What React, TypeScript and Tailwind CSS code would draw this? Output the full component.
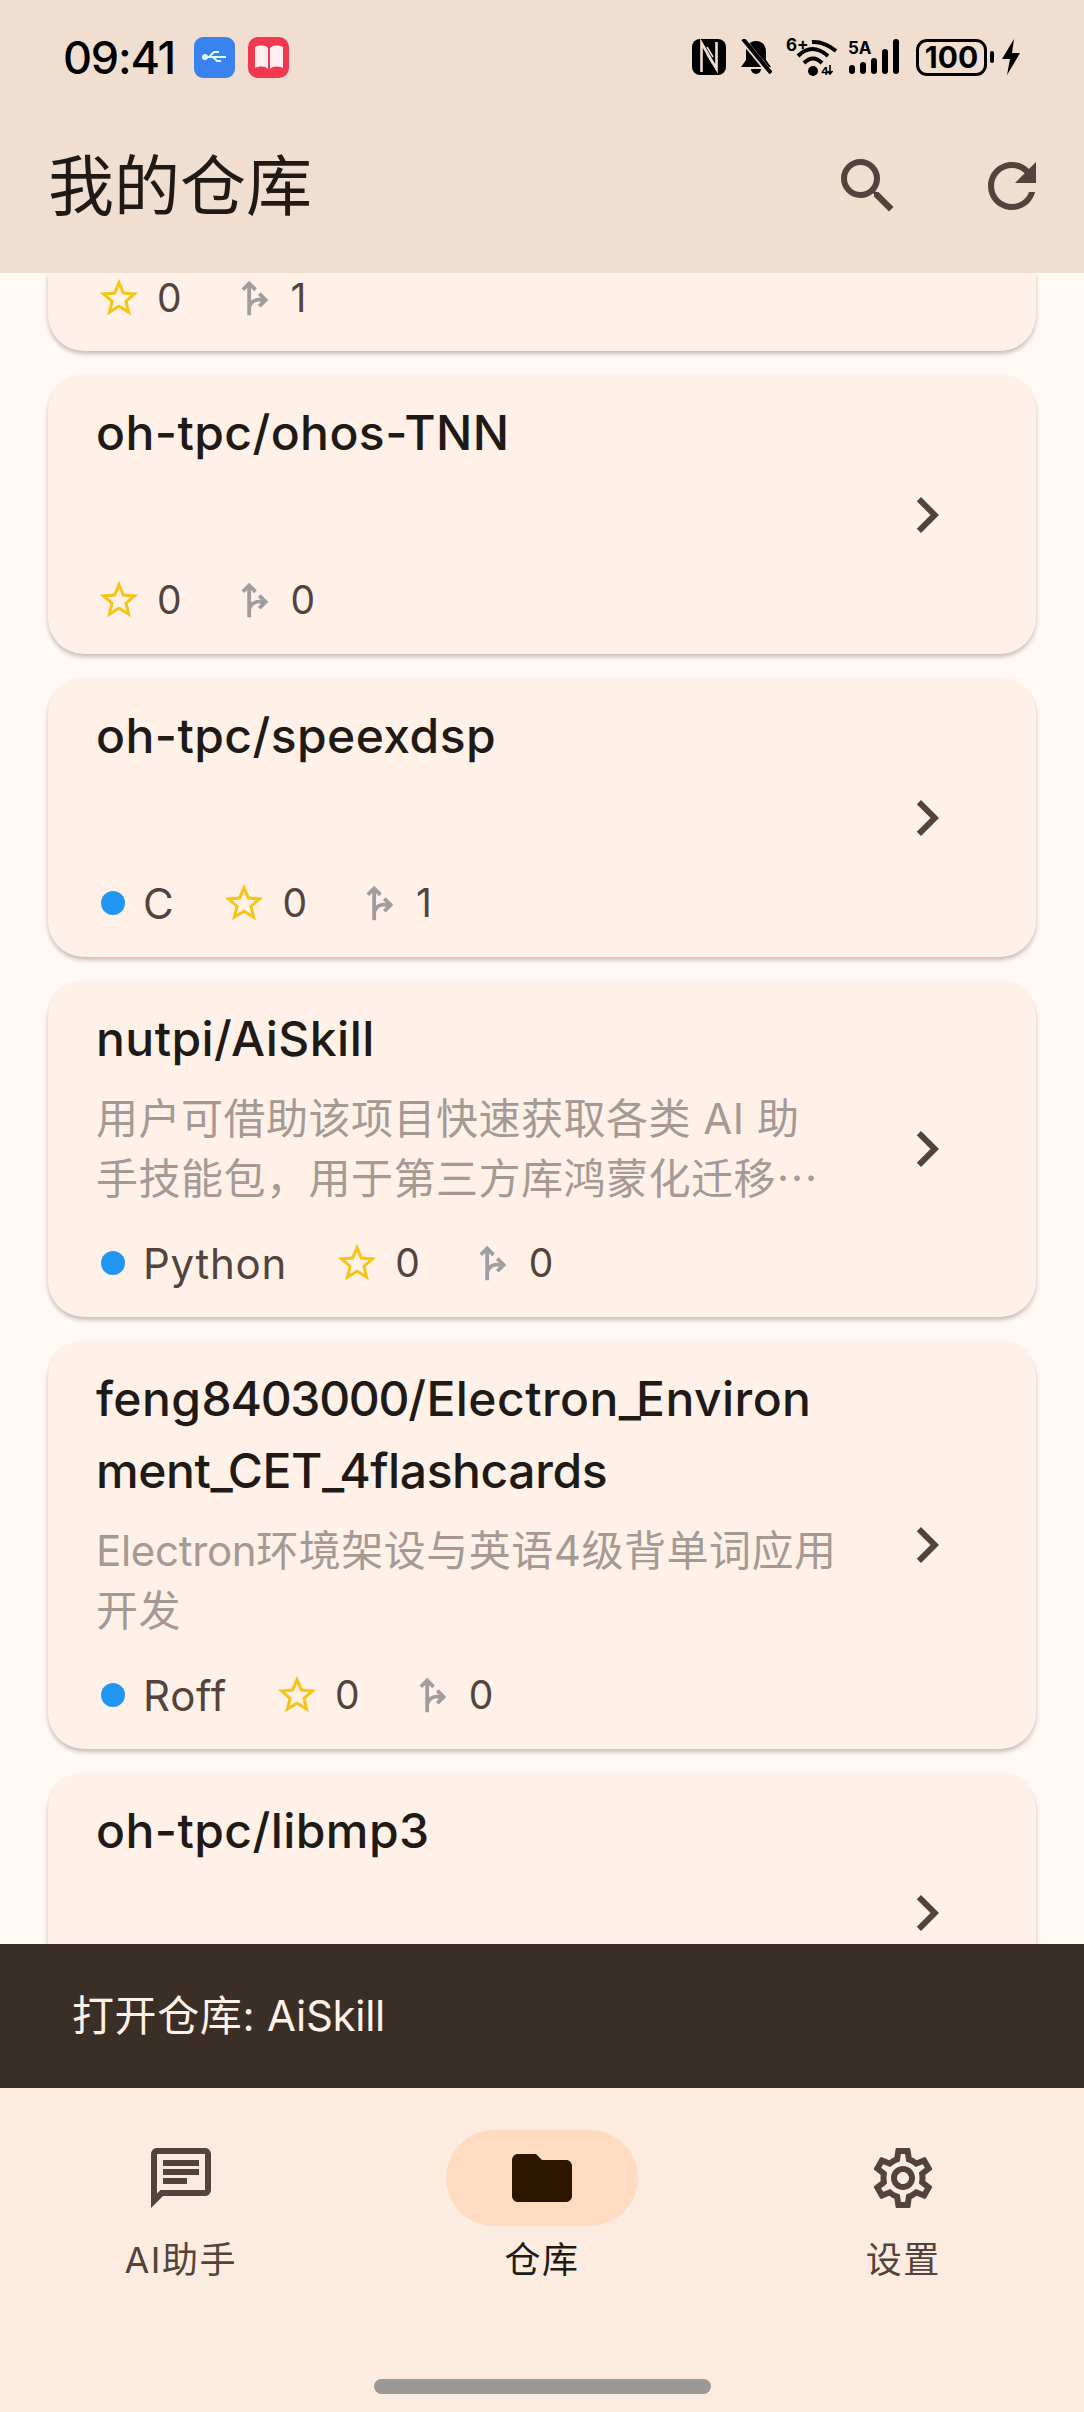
import React from "react";
import { MdSearch, MdRefresh, MdChevronRight, MdStarBorder, MdOutlineForkRight, MdOutlineChat, MdFolder, MdOutlineSettings } from "react-icons/md";

type Repo = { title: React.ReactNode; desc?: React.ReactNode; lang?: string; stars?: number; forks?: number };

const Meta = ({ lang, stars, forks }: { lang?: string; stars: number; forks: number }) => (
  <div className="flex h-[60px] items-center text-[39px] text-[#52443c]">
    {lang && (
      <>
        <span className="ml-[5px] h-[24px] w-[24px] rounded-full bg-[#2196f3]" />
        <span className="ml-[18px] mr-[47px] text-[42px] tracking-[0.75px]">{lang}</span>
      </>
    )}
    <MdStarBorder className="h-[46px] w-[46px] shrink-0 text-[#f5c518]" />
    <span className="ml-[15px]">{stars}</span>
    <MdOutlineForkRight className="ml-[48px] h-[46px] w-[46px] shrink-0 text-[#9e9e9e]" />
    <span className="ml-[15px]">{forks}</span>
  </div>
);

const Card = ({ title, desc, lang, stars, forks }: Repo) => (
  <div className="flex w-[988px] shrink-0 items-center rounded-[36px] bg-[#fff1e8] pr-[70px] pl-[48px] shadow-[0_3px_4px_rgba(60,40,30,0.28)]">
    <div className="w-[745px] pt-[22px] pb-[24px]">
      <div className="text-[48px] leading-[72px] font-medium tracking-[0.45px] whitespace-nowrap text-[#201a17]">{title}</div>
      <div className="mt-[14px] min-h-[63px] text-[42px] leading-[60px] tracking-[0.5px] whitespace-nowrap text-[#a39a94]">{desc}</div>
      <div className="mt-[24px] h-[60px]">
        {stars !== undefined && forks !== undefined && <Meta lang={lang} stars={stars} forks={forks} />}
      </div>
    </div>
    <MdChevronRight className="ml-[50px] h-[72px] w-[72px] shrink-0 text-[#52443c]" />
  </div>
);

const Dots = () => <span className="font-['Noto_Sans_CJK_SC'] leading-[0]">…</span>;
const U = () => <span className="tracking-[-5px]">_</span>;
const N = ({ children }: { children: React.ReactNode }) => <span className="tracking-[-1.3px]">{children}</span>;

const StatusIcons = () => (
  <div className="flex items-center text-black">
    <svg width="34" height="36" viewBox="0 0 34 36" className="mr-[14px]">
      <rect x="0" y="0" width="34" height="36" rx="8" fill="#000" />
      <path d="M9.5 33 V4 L24.5 30 V3" stroke="#f0dfd1" strokeWidth="2.6" fill="none" />
      <path d="M15 15 L21 25 M15 8 L21 18" stroke="#f0dfd1" strokeWidth="1.6" fill="none" />
    </svg>
    <svg width="32" height="36" viewBox="0 0 32 36" className="mr-[14px]">
      <path d="M16 2c6 0 10 4 10 11v8l5 7H1l5-7v-8C6 6 10 2 16 2z" fill="#000" />
      <path d="M11 30h10a5 5 0 0 1-10 0z" fill="#000" />
      <path d="M2 0 L30 34" stroke="#f0dfd1" strokeWidth="6" />
      <path d="M3 0 L31 34" stroke="#000" strokeWidth="4" />
    </svg>
    <svg width="52" height="42" viewBox="0 0 52 42" className="mr-[10px]">
      <text x="0" y="15" fontSize="17" fontWeight="700" fontFamily="Inter, sans-serif">6+</text>
      <path d="M26 6 Q38 5 50 15" stroke="#000" strokeWidth="4" fill="none" />
      <path d="M12 20 Q26 6 42 20" stroke="#000" strokeWidth="4" fill="none" />
      <path d="M18 27 Q27 18 36 27" stroke="#000" strokeWidth="4" fill="none" />
      <circle cx="27" cy="35" r="5" fill="#000" />
      <text x="35" y="39" fontSize="11" fontWeight="700" fontFamily="Inter, sans-serif">4</text>
      <path d="M44 29v9M41.5 35l2.5 3 2.5-3" stroke="#000" strokeWidth="1.6" fill="none" />
    </svg>
    <svg width="54" height="36" viewBox="0 0 54 36" className="mr-[14px]">
      <text x="0" y="15" fontSize="17" fontWeight="700" fontFamily="Inter, sans-serif">5A</text>
      <rect x="1" y="26" width="6" height="9" rx="3" fill="#000" />
      <rect x="12" y="23" width="6" height="12" rx="3" fill="#000" />
      <rect x="23" y="19" width="6" height="16" rx="3" fill="#000" />
      <rect x="34" y="10" width="6" height="25" rx="3" fill="#000" />
      <rect x="45" y="0" width="6" height="35" rx="3" fill="#000" />
    </svg>
    <div className="flex h-[37px] w-[71px] items-center justify-center rounded-[11px] border-[3px] border-black text-[30px] leading-none font-bold">100</div>
    <span className="ml-[3px] h-[12px] w-[4px] rounded-[2px] bg-black" />
    <svg width="20" height="36" viewBox="0 0 20 36" className="ml-[7px]">
      <path d="M13 0 L1 20 H9 L6 36 L19 14 H11Z" fill="#000" />
    </svg>
  </div>
);

const NavItem = ({ icon, label, active }: { icon: React.ReactNode; label: string; active?: boolean }) => (
  <div className="flex flex-col items-center">
    <div className={`flex h-[96px] w-[192px] items-center justify-center rounded-full ${active ? "bg-[#ffdcc1]" : ""}`}>{icon}</div>
    <div className={`mt-[10px] text-[36px] leading-[48px] tracking-[1.5px] ${active ? "text-[#201a17]" : "text-[#52443c]"}`}>{label}</div>
  </div>
);

export default function App() {
  return (
    <div className="flex h-[2412px] w-[1084px] flex-col overflow-hidden bg-[#fff9f4] font-['Inter','Noto_Sans_CJK_SC',sans-serif]" lang="zh-CN">
      <header className="relative z-10 h-[273px] shrink-0 bg-[#f0dfd1]">
        <div className="flex h-[114px] items-center justify-between pr-[63px] pl-[63px]">
          <div className="flex items-center">
            <span className="w-[131px] text-[45px] leading-none tracking-[-1.2px] font-medium text-black">09:41</span>
            <span className="flex h-[41px] w-[41px] items-center justify-center rounded-[9px] bg-[#3a82ee]">
              <svg width="28" height="16" viewBox="0 0 28 16">
                <path d="M3 8h22M8 8l5-5h5M12 8l4 4h4" stroke="#dff" strokeWidth="2" fill="none" />
                <circle cx="4" cy="8" r="3" fill="#dff" />
              </svg>
            </span>
            <span className="ml-[13px] flex h-[41px] w-[41px] items-center justify-center rounded-[10px] bg-[#f0384f]">
              <svg width="30" height="26" viewBox="0 0 30 26">
                <path d="M1 3c5-2 10-2 13 1v21c-3-3-8-3-13-1zM29 3c-5-2-10-2-13 1v21c3-3 8-3 13-1z" fill="#ffeef0" />
              </svg>
            </span>
          </div>
          <StatusIcons />
        </div>
        <div className="flex h-[144px] items-center">
          <h1 className="flex-1 pl-[48px] text-[66px] leading-none font-normal text-[#201a17]">我的仓库</h1>
          <div className="flex h-[144px] w-[144px] items-center justify-center">
            <MdSearch className="h-[72px] w-[72px] text-[#52443c]" />
          </div>
          <div className="flex h-[144px] w-[144px] items-center justify-center">
            <MdRefresh className="h-[72px] w-[72px] text-[#52443c]" />
          </div>
        </div>
      </header>

      <main className="flex min-h-0 flex-1 flex-col items-center gap-[24px] overflow-hidden">
        <div className="w-[988px] shrink-0 rounded-b-[36px] bg-[#fff1e8] pb-[23px] pl-[48px] shadow-[0_3px_4px_rgba(60,40,30,0.28)]">
          <div className="-mt-[5px]">
            <Meta stars={0} forks={1} />
          </div>
        </div>
        <Card title="oh-tpc/ohos-TNN" stars={0} forks={0} />
        <Card title="oh-tpc/speexdsp" lang="C" stars={0} forks={1} />
        <Card title="nutpi/AiSkill" desc={<>用户可借助该项目快速获取各类 AI 助<br />手技能包，用于第三方库鸿蒙化迁移<Dots /></>} lang="Python" stars={0} forks={0} />
        <Card
          title={
            <>
              feng<N>8403000</N>/Electron<U />Environ
              <br />
              <span className="tracking-[-0.4px]">ment<U />CET<U />4flashcards</span>
            </>
          }
          desc={<><span className="tracking-[-0.3px]">Electron</span>环境架设与英语4级背单词应用<br />开发</>}
          lang="Roff"
          stars={0}
          forks={0}
        />
        <Card title="oh-tpc/libmp3" />
      </main>

      <div className="flex h-[144px] shrink-0 items-center bg-[#3a2f27] pl-[72px] text-[42px] leading-[60px] tracking-[0.6px] text-[#fff1e8]">
        <span>打开仓库:</span>
        <span className="ml-[12px] tracking-[-0.3px]">AiSkill</span>
      </div>

      <nav className="flex h-[324px] shrink-0 flex-col bg-[#fcece0]">
        <div className="grid grid-cols-3 pt-[42px]">
          <NavItem icon={<MdOutlineChat className="h-[72px] w-[72px] text-[#52443c]" />} label="AI助手" />
          <NavItem active icon={<MdFolder className="h-[72px] w-[72px] text-[#2c1600]" />} label="仓库" />
          <NavItem icon={<MdOutlineSettings className="h-[72px] w-[72px] text-[#52443c]" />} label="设置" />
        </div>
        <div className="mx-auto mt-[95px] h-[15px] w-[337px] rounded-full bg-[#9b9896]" />
      </nav>
    </div>
  );
}
